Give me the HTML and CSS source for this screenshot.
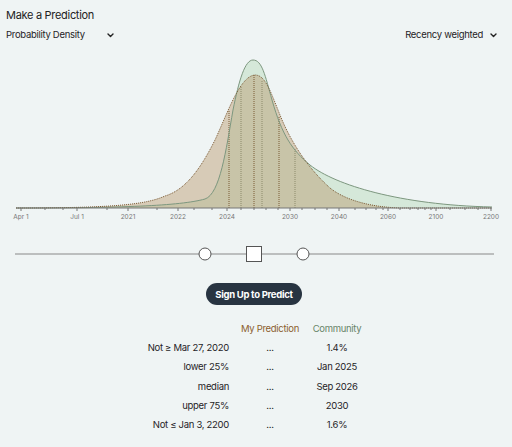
FILE: index.html
```html
<!DOCTYPE html>
<html lang="en">
<head>
    <meta charset="UTF-8">
    <meta name="viewport" content="width=device-width, initial-scale=1.0">
    <title>Make a Prediction</title>
    <link rel="stylesheet" href="styles.css">
</head>
<body>
    <div class="page">
        <h1 class="title">Make a Prediction</h1>

        <div class="controls">
            <div class="select select-left">
                <span>Probability Density</span>
                <svg class="chevron" width="7" height="5" viewBox="0 0 7 5"><path d="M1 1 L3.5 3.5 L6 1" fill="none" stroke="#222" stroke-width="1.4" stroke-linecap="round" stroke-linejoin="round"/></svg>
            </div>
            <div class="select">
                <span>Recency weighted</span>
                <svg class="chevron" width="7" height="5" viewBox="0 0 7 5"><path d="M1 1 L3.5 3.5 L6 1" fill="none" stroke="#222" stroke-width="1.4" stroke-linecap="round" stroke-linejoin="round"/></svg>
            </div>
        </div>

        <svg class="chart" width="512" height="180" viewBox="0 44 512 180">
            <!-- community -->
            <path class="area-community" d="M16,208 C120,208 180,206 205,199 C220,194 226,150 233,110 C239,80 245,60 253,60 C262,60 265,75 272,100 C282,135 292,150 310,165 C335,185 400,205 492,207 L492,208 Z"/>
            <!-- my prediction -->
            <path class="area-mine" d="M16,208 C110,208 145,205 165,196 C185,190 200,170 215,140 C228,112 240,76 255,75 C265,75 270,90 280,115 C292,145 310,170 330,188 C345,200 370,207 400,208 Z"/>

            <line class="q-mine" x1="229" y1="208" x2="229" y2="110"/>
            <line class="q-comm" x1="241" y1="208" x2="241" y2="86"/>
            <line class="q-mine" x1="254" y1="208" x2="254" y2="75"/>
            <line class="q-comm" x1="262" y1="208" x2="262" y2="80"/>
            <line class="q-mine" x1="279" y1="208" x2="279" y2="116"/>
            <line class="q-comm" x1="295" y1="208" x2="295" y2="148"/>

            <path class="line-community" d="M16,208 C120,208 180,206 205,199 C220,194 226,150 233,110 C239,80 245,60 253,60 C262,60 265,75 272,100 C282,135 292,150 310,165 C335,185 400,205 492,207"/>
            <path class="line-mine" d="M16,208 C110,208 145,205 165,196 C185,190 200,170 215,140 C228,112 240,76 255,75 C265,75 270,90 280,115 C292,145 310,170 330,188 C345,200 370,207 400,208 L492,208"/>

            <line class="axis" x1="16" y1="208" x2="492" y2="208"/>
            <path class="ticks" d="M21,208v3 M45,208v2 M63,208v2 M77,208v3 M107,208v2 M128,208v3 M157,208v2 M178,208v3 M194,208v2 M212,208v2 M227,208v3 M241,208v2 M254,208v2 M266,208v2 M278,208v2 M290,208v3 M302,208v2 M315,208v2 M327,208v2 M339,208v3 M355,208v2 M366,208v2 M376,208v2 M383,208v2 M388,208v3 M400,208v2 M410,208v2 M418,208v2 M425,208v2 M431,208v2 M436,208v3 M450,208v2 M465,208v2 M478,208v2 M491,208v3"/>

            <g class="tick-labels">
                <text x="21" y="219">Apr 1</text>
                <text x="77" y="219">Jul 1</text>
                <text x="128" y="219">2021</text>
                <text x="178" y="219">2022</text>
                <text x="227" y="219">2024</text>
                <text x="290" y="219">2030</text>
                <text x="339" y="219">2040</text>
                <text x="388" y="219">2060</text>
                <text x="436" y="219">2100</text>
                <text x="491" y="219">2200</text>
            </g>
        </svg>

        <svg class="slider" width="512" height="28" viewBox="0 240 512 28">
            <line x1="15" y1="254" x2="494" y2="254"/>
            <circle cx="205" cy="254" r="6"/>
            <rect x="246.5" y="246.5" width="15" height="15"/>
            <circle cx="303" cy="254" r="6"/>
        </svg>

        <div class="actions">
            <button class="signup">Sign Up to Predict</button>
        </div>

        <div class="table">
            <div></div>
            <div class="head mine">My Prediction</div>
            <div class="head comm">Community</div>

            <div class="label">Not ≥ Mar 27, 2020</div>
            <div class="cell">...</div>
            <div class="cell">1.4%</div>

            <div class="label">lower 25%</div>
            <div class="cell">...</div>
            <div class="cell">Jan 2025</div>

            <div class="label">median</div>
            <div class="cell">...</div>
            <div class="cell">Sep 2026</div>

            <div class="label">upper 75%</div>
            <div class="cell">...</div>
            <div class="cell">2030</div>

            <div class="label">Not ≤ Jan 3, 2200</div>
            <div class="cell">...</div>
            <div class="cell">1.6%</div>
        </div>
    </div>
</body>
</html>
```

FILE: styles.css
```css
body {
    margin: 0;
    background: #eff4f4;
    font-family: Inter, "Liberation Sans", sans-serif;
    color: #1f2326;
}
.page {
    width: 508px;
    overflow: hidden;
}
.title {
    margin: 0;
    padding: 7px 0 0 6px;
    font-size: 11px;
    line-height: 16px;
    font-weight: 400;
    letter-spacing: -0.3px;
    color: #222;
}
.controls {
    display: flex;
    justify-content: space-between;
    margin-top: 5px;
    padding: 0 11px 0 6px;
    font-size: 9.5px;
    line-height: 14px;
    letter-spacing: -0.3px;
}
.select {
    display: flex;
    align-items: center;
    gap: 7px;
}
.select-left {
    width: 108px;
    justify-content: space-between;
}
.chevron {
    display: block;
}
.chart {
    display: block;
    margin-top: 2px;
}
.area-community {
    fill: #d5e8d9;
}
.area-mine {
    fill: rgba(185, 150, 105, 0.44);
}
.line-community {
    fill: none;
    stroke: #7d977f;
    stroke-width: 1;
}
.line-mine {
    fill: none;
    stroke: #7a5a35;
    stroke-width: 1;
    stroke-dasharray: 1 1;
}
.q-mine {
    stroke: #7a5a35;
    stroke-width: 1;
    stroke-dasharray: 1 1;
}
.q-comm {
    stroke: #8c8a6a;
    stroke-width: 1;
    stroke-dasharray: 1 1;
}
.axis,
.ticks {
    stroke: #777;
    stroke-width: 1;
    fill: none;
}
.tick-labels text {
    font-size: 6.5px;
    fill: #777;
    text-anchor: middle;
}
.slider {
    display: block;
    margin-top: 16px;
}
.slider line {
    stroke: #888;
    stroke-width: 1;
}
.slider circle,
.slider rect {
    fill: #fff;
    stroke: #555;
    stroke-width: 1;
}
.actions {
    display: flex;
    justify-content: center;
    margin-top: 15px;
}
.signup {
    height: 22px;
    padding: 0 9px;
    border: none;
    border-radius: 11px;
    background: #283441;
    color: #fff;
    font-family: inherit;
    font-size: 9.5px;
    font-weight: 700;
    letter-spacing: -0.3px;
}
.table {
    display: grid;
    grid-template-columns: 229px 82px 52px;
    grid-auto-rows: 19.2px;
    align-items: center;
    margin-top: 14px;
    font-size: 9.5px;
    letter-spacing: -0.3px;
}
.head {
    text-align: center;
}
.mine {
    color: #8b5e2e;
}
.comm {
    color: #678469;
}
.label {
    text-align: right;
}
.cell {
    text-align: center;
}
```
